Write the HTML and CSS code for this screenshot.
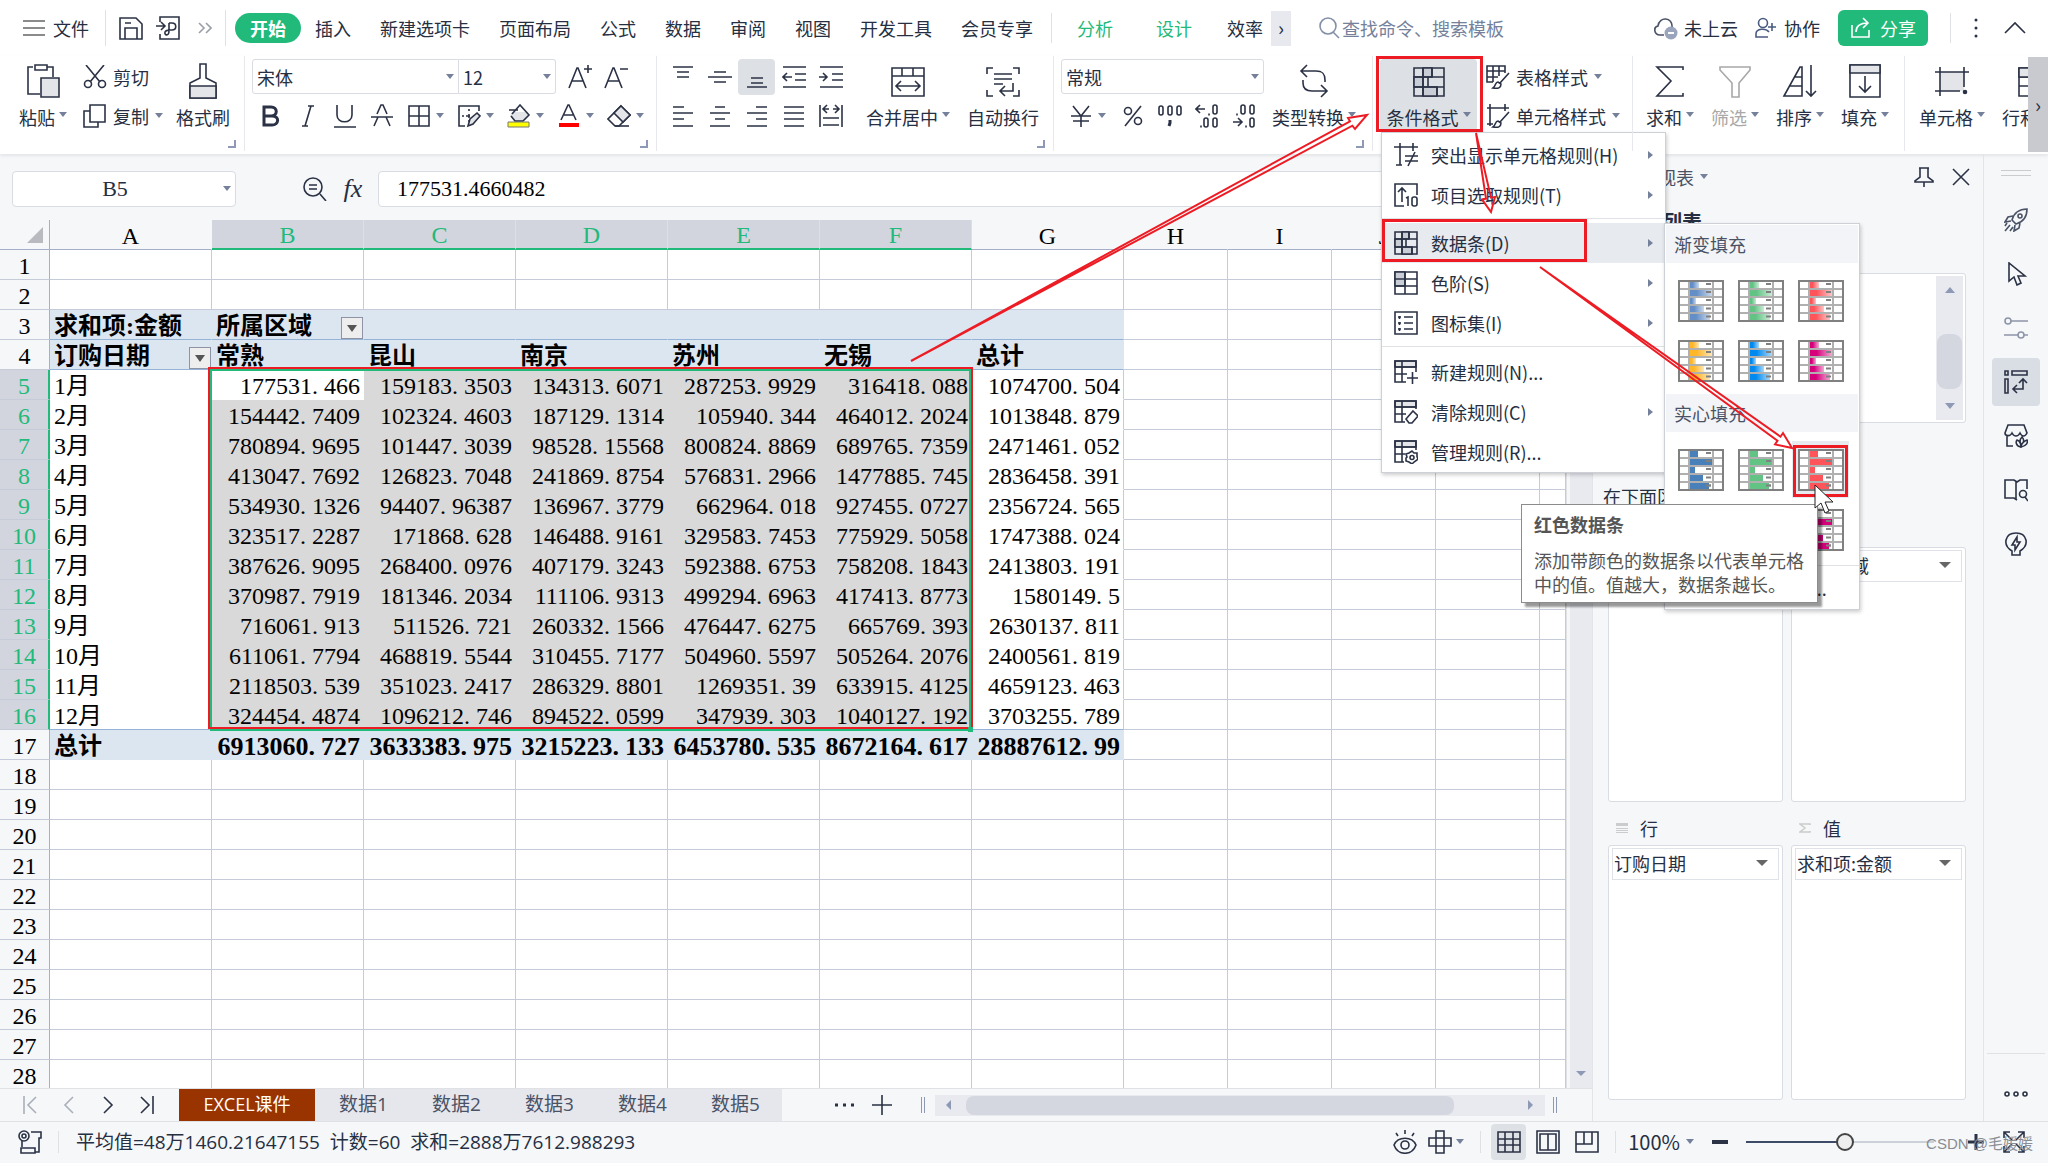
FILE: index.html
```html
<!DOCTYPE html>
<html lang="zh-CN">
<head>
<meta charset="utf-8">
<title>EXCEL课件</title>
<link rel="stylesheet" href="styles.css">
</head>
<body>
<svg class="defs" aria-hidden="true">
  <defs>
    <linearGradient id="fadeGrad"><stop offset="0" stop-color="#fff"/><stop offset=".3" stop-color="#fff"/><stop offset="1" stop-color="#555"/></linearGradient>
    <mask id="fade" x="0" y="0" width="1" height="1" maskContentUnits="objectBoundingBox"><rect width="1" height="1" fill="url(#fadeGrad)" stroke="none"/></mask>
    <symbol id="thumb-grid" viewBox="0 0 46 42">
      <path d="M11 1v40M35 1v40M1 9h44M1 17h44M1 25h44M1 33h44" stroke="#b0b0b0" stroke-width="2" fill="none"/>
      <path d="M28 4h5M28 12h5M28 20h5M28 28.500h5M28 36.500h5" stroke="#808080" stroke-width="2"/>
      <rect x="1" y="1" width="44" height="40" fill="none" stroke="#808080" stroke-width="2"/>
    </symbol>
    <symbol id="bars-gradient" viewBox="0 0 46 42">
      <rect width="46" height="42" fill="#fff"/>
      <g fill="currentColor"><rect x="12" y="2" width="9" height="6" mask="url(#fade)"/><rect x="12" y="10" width="22" height="6" mask="url(#fade)"/><rect x="12" y="18" width="6" height="6" mask="url(#fade)"/><rect x="12" y="26" width="14" height="6" mask="url(#fade)"/><rect x="12" y="34" width="20" height="6" mask="url(#fade)"/></g>
      <use href="#thumb-grid"/>
    </symbol>
    <symbol id="bars-solid" viewBox="0 0 46 42">
      <rect width="46" height="42" fill="#fff"/>
      <use href="#thumb-grid"/>
      <path fill="currentColor" d="M12 2h8v6h-8zM12 10h22v6H12zM12 18h5v6h-5zM12 26h13v6H12zM12 34h19v6H12z"/>
      <path d="M28 12h5M28 36.500h5" stroke="#808080" stroke-width="2"/>
    </symbol>
    <symbol id="down" viewBox="0 0 8 6"><path d="M0 0h8L4 5z" fill="#75819b"/></symbol>
    <symbol id="corner" viewBox="0 0 8 8"><path d="M7 0v7H0" fill="none" stroke="#8d99b5" stroke-width="2"/></symbol>
  </defs>
</svg>

<header class="topbar">
  <button class="file"><svg class="i24" viewBox="0 0 24 24"><path d="M1 5h22M1 12h22M1 19h22"/></svg>文件</button>
  <span class="vline"></span>
  <button class="quick" aria-label="保存"><svg class="i24" viewBox="0 0 24 24"><path d="M1 2h16l6 6v15H1zM6 23V12h12v11M6 7h6"/></svg></button>
  <button class="quick" aria-label="输出为PDF"><svg class="i24" viewBox="0 0 24 24"><path d="M4 6V1h19v22H4v-5M0 10h8M5 6l4 4-4 4M13 7h3c5 0 5 7 0 7h-2M13 7v8c0 6-5 4-4 1 1-2 3-2 5-2"/></svg></button>
  <button class="more" aria-label="更多"><svg class="i14" viewBox="0 0 14 14"><path d="M1 2l5 5-5 5M8 2l5 5-5 5" stroke="#9a9fa8"/></svg></button>
  <span class="vline"></span>
  <nav class="tabs main-tabs">
    <a class="current" href="#">开始</a><a href="#">插入</a><a href="#">新建选项卡</a><a href="#">页面布局</a><a href="#">公式</a><a href="#">数据</a><a href="#">审阅</a><a href="#">视图</a><a href="#">开发工具</a><a href="#">会员专享</a>
  </nav>
  <span class="vline short"></span>
  <nav class="tabs extra"><a class="green" href="#">分析</a><a class="green" href="#">设计</a><a href="#">效率</a></nav>
  <button class="tab-next" aria-label="下一个">›</button>
  <label class="search"><svg class="i22" viewBox="0 0 22 22"><circle cx="10" cy="9" r="8"/><path d="M15 15l6 6"/></svg><input type="text" placeholder="查找命令、搜索模板" aria-label="查找命令、搜索模板"></label>
  <div class="account">
    <button class="cloud"><svg class="i24" viewBox="0 0 24 24"><path d="M10 19H6C0 19-1 11 4 10 5 0 19 1 18 11" stroke="#4a5266"/><circle cx="17" cy="17" r="6.500" fill="#9aa5bd" stroke="none"/><path d="M14 17h6" stroke="#fff" stroke-width="2"/></svg>未上云</button>
    <button class="collab"><svg class="i22" viewBox="0 0 22 22"><circle cx="8" cy="6" r="4.500" stroke="#4a5a80"/><path d="M13 20H1v-3c0-6 10-6 13-2M13 10h8M17 6v8" stroke="#4a5a80"/></svg>协作</button>
    <button class="share"><svg class="i22" viewBox="0 0 22 22"><path d="M2 8v12h17v-7M6 15c0-6 4-9 12-9M13 1l5 5-5 5" stroke="#fff"/></svg>分享</button>
    <span class="vline short"></span>
    <button class="dots" aria-label="菜单"><svg class="i22" viewBox="0 0 22 22"><path d="M11 3v.1M11 11v.1M11 19v.1" stroke-width="3" stroke-linecap="round"/></svg></button>
    <button aria-label="收起"><svg class="i22" viewBox="0 0 22 22"><path d="M1 16L11 6l10 10"/></svg></button>
  </div>
</header>

<section class="ribbon">
  <div class="group g1">
    <button class="big w52"><svg class="i36" viewBox="0 0 36 36"><path d="M8 4H3v27h12M22 4h6v10M10 2h12v5H10z"/><path d="M16 15h18v19H16z" fill="#e3e5e9"/></svg><span>粘贴<svg class="dn"><use href="#down"/></svg></span></button>
    <div class="stack clip">
      <button><svg class="i24" viewBox="0 0 24 24"><path d="M3 0l14 17M21 0L7 17"/><circle cx="5" cy="19" r="3.500"/><circle cx="19" cy="19" r="3.500"/></svg>剪切</button>
      <button><svg class="i24" viewBox="0 0 24 24"><path d="M7 1h15v17H7zM7 7H1v16h14v-5"/></svg>复制<svg class="dn"><use href="#down"/></svg></button>
    </div>
    <button class="big w54"><svg class="i36" viewBox="0 0 36 36"><path d="M15 1h6v14l10 5v15H5V20l10-5z"/><path d="M5 23h26v12H5z" fill="#e3e5e9"/></svg><span>格式刷</span></button>
    <svg class="launch"><use href="#corner"/></svg>
  </div>
  <div class="group g2">
    <div class="stack">
      <div class="row"><div class="combo wide"><select aria-label="字体"><option>宋体</option></select><svg class="dn"><use href="#down"/></svg></div><div class="combo size"><select aria-label="字号"><option>12</option></select><svg class="dn"><use href="#down"/></svg></div>
        <button class="w36 afirst" aria-label="增大字号"><svg class="i24" viewBox="0 0 24 24"><path d="M1 23L9 3h1l8 20M4 16h11M20 0v8M16 4h8"/></svg></button><button class="w36" aria-label="减小字号"><svg class="i24" viewBox="0 0 24 24"><path d="M1 23L9 3h1l8 20M4 16h11M16 4h8"/></svg></button></div>
      <div class="row">
        <button class="w37" aria-label="加粗"><svg class="i24" viewBox="0 0 24 24"><path d="M5 3h7c7 0 7 9 0 9H5zM5 12h8c8 0 7 9 0 9H5z" stroke-width="3"/></svg></button>
        <button class="w37" aria-label="倾斜"><svg class="i24" viewBox="0 0 24 24"><path d="M12 2h6M6 22h6M15 2L9 22"/></svg></button>
        <button class="w37" aria-label="下划线"><svg class="i24" viewBox="0 0 24 24"><path d="M4 1v10c0 9 15 9 15 0V1M1 23h22"/></svg></button>
        <button class="w37" aria-label="删除线"><svg class="i24" viewBox="0 0 24 24"><path d="M7 10l4-9h2l4 9M1 13h22M4 22l4-9M20 22l-4-9"/></svg></button>
        <button class="split" aria-label="边框"><svg class="i24" viewBox="0 0 24 24"><path d="M2 2h20v20H2zM12 2v20M2 12h20"/></svg><svg class="dn"><use href="#down"/></svg></button>
        <button class="split" aria-label="绘制边框"><svg class="i24" viewBox="0 0 24 24"><path d="M8 22H2V2h20v5M5 12h2M9 12h4M12 5v2M12 10v4M12 16v2"/><path d="M11 22l2-7 7-6 3 3-7 8z" fill="#e3e5e9"/></svg><svg class="dn"><use href="#down"/></svg></button>
        <button class="split" aria-label="填充颜色"><svg class="i24" viewBox="0 0 24 24"><path d="M5 8h14l3 4-6 6H8l-5-6z" fill="#e3e5e9" stroke="none"/><path d="M2 6h9M5 10l8-9 9 10-6 6H8l-4-5"/><path d="M1 18h21v5H1z" fill="#ff0" stroke="#777" stroke-width="1"/></svg><svg class="dn"><use href="#down"/></svg></button>
        <button class="split" aria-label="字体颜色"><svg class="i24" viewBox="0 0 24 24"><path d="M4 16L11 1h1l7 15M7 11h9"/><path d="M2 21h20" stroke="red" stroke-width="4"/></svg><svg class="dn"><use href="#down"/></svg></button>
        <button class="split" aria-label="清除"><svg class="i24" viewBox="0 0 24 24"><path d="M14 2l9 9-11 11H8l-7-7z"/><path d="M14 2l9 9-7 7-9-9z" fill="#e3e5e9"/><path d="M8 22h14"/></svg><svg class="dn"><use href="#down"/></svg></button>
      </div>
    </div>
    <svg class="launch"><use href="#corner"/></svg>
  </div>
  <div class="group g3">
    <div class="stack">
      <div class="row">
        <button class="w37" aria-label="顶端对齐"><svg class="i24" viewBox="0 0 24 24"><path d="M2 2h20M6 7h12M6 12h12"/></svg></button>
        <button class="w37" aria-label="垂直居中"><svg class="i24" viewBox="0 0 24 24"><path d="M6 7h12M0 12h24M6 17h12"/></svg></button>
        <button class="w37 on" aria-label="底端对齐"><svg class="i24" viewBox="0 0 24 24"><path d="M6 13h12M6 18h12M2 22h20"/></svg></button>
        <button class="w37" aria-label="减少缩进"><svg class="i24" viewBox="0 0 24 24"><path d="M1 2h23M13 9h11M13 15h11M1 22h23M1 12h9M5 8l-4 4 4 4"/></svg></button>
        <button class="w37" aria-label="增加缩进"><svg class="i24" viewBox="0 0 24 24"><path d="M1 2h23M13 9h11M13 15h11M1 22h23M0 12h8M4 8l4 4-4 4"/></svg></button>
      </div>
      <div class="row">
        <button class="w37" aria-label="左对齐"><svg class="i24" viewBox="0 0 24 24"><path d="M2 3h11M2 9h20M2 15h11M2 22h20"/></svg></button>
        <button class="w37" aria-label="居中"><svg class="i24" viewBox="0 0 24 24"><path d="M7 3h10M2 9h20M7 15h10M2 22h20"/></svg></button>
        <button class="w37" aria-label="右对齐"><svg class="i24" viewBox="0 0 24 24"><path d="M11 3h11M2 9h20M11 15h11M2 22h20"/></svg></button>
        <button class="w37" aria-label="两端对齐"><svg class="i24" viewBox="0 0 24 24"><path d="M2 3h20M2 9h20M2 15h20M2 22h20"/></svg></button>
        <button class="w37" aria-label="分散对齐"><svg class="i24" viewBox="0 0 24 24"><path d="M1 1v22M23 1v22M5 5h5M14 5h5M8 1L4 5l4 4M16 1l4 4-4 4M4 14h16M4 21h16"/></svg></button>
      </div>
    </div>
    <button class="big gap17 w84"><svg class="i36" viewBox="0 0 36 36"><path d="M2 5h32v28H2zM2 13h32M12 5v8M23 5v8M6 23h24M11 18l-5 5 5 5M25 18l5 5-5 5"/></svg><span>合并居中<svg class="dn"><use href="#down"/></svg></span></button>
    <button class="big gap17 w72"><svg class="i36" viewBox="0 0 36 36"><path d="M2 11V5h6M28 5h6v6M2 27v6h6M34 27v6h-6M9 11h18M9 16h18M9 21h9M28 20v8H15M20 23l-5 5 5 5"/></svg><span>自动换行</span></button>
    <svg class="launch"><use href="#corner"/></svg>
  </div>
  <div class="group g4">
    <div class="stack">
      <div class="row"><div class="combo fmt"><select aria-label="数字格式"><option>常规</option></select><svg class="dn"><use href="#down"/></svg></div></div>
      <div class="row">
        <button class="split yen" aria-label="货币"><svg class="i24" viewBox="0 0 24 24"><path d="M4 2l8 10 8-10M12 12v11M2 12h20M4 17h16"/></svg><svg class="dn"><use href="#down"/></svg></button>
        <button class="w37" aria-label="百分比"><svg class="i24" viewBox="0 0 24 24"><path d="M20 2L4 22"/><circle cx="7" cy="7" r="3.500"/><circle cx="17" cy="17" r="3.500"/></svg></button>
        <button class="w37" aria-label="千位分隔"><svg class="i24" viewBox="0 0 24 24"><rect x="1" y="2" width="4" height="9" rx="2"/><rect x="10" y="2" width="4" height="9" rx="2"/><rect x="19" y="2" width="4" height="9" rx="2"/><path d="M12 16v3l-1 3" stroke-width="3"/></svg></button>
        <button class="w37" aria-label="增加小数位"><svg class="i24" viewBox="0 0 24 24"><path d="M1 5h9M5 1L1 5l4 4M14 9.500v2M6 21.500v2"/><rect x="18" y="1" width="4" height="9" rx="2"/><rect x="9" y="14" width="4" height="9" rx="2"/><rect x="18" y="14" width="4" height="9" rx="2"/></svg></button>
        <button class="w37" aria-label="减少小数位"><svg class="i24" viewBox="0 0 24 24"><path d="M1 18h9M6 14l4 4-4 4M5 9.500v2M14 21.500v2"/><rect x="9" y="1" width="4" height="9" rx="2"/><rect x="18" y="1" width="4" height="9" rx="2"/><rect x="18" y="14" width="4" height="9" rx="2"/></svg></button>
      </div>
    </div>
    <button class="big gap8 w84"><svg class="i36" viewBox="0 0 36 36"><path d="M11 2L5 8l6 6M5 8h15c7 0 9 3 9 9v2M7 17v3c0 6 3 8 9 8h14M25 22l6 6-6 6"/></svg><span>类型转换<svg class="dn"><use href="#down"/></svg></span></button>
    <svg class="launch"><use href="#corner"/></svg>
  </div>
  <div class="group g5">
    <div class="cond">
      <button class="big w99 on marked"><svg class="i36" viewBox="0 0 36 36"><path d="M3 5h30v28H3z"/><path d="M12 5h9v9h-9zM3 14h9v10H3zM12 24h14v9H12z" fill="#c9cdd6"/><path d="M3 14h30M3 24h30M12 5v28M21 5v9M17 14v10M26 24v9"/></svg><span>条件格式<svg class="dn"><use href="#down"/></svg></span></button>
      <div class="menu">
        <button class="item"><svg class="i24" viewBox="0 0 24 24"><path d="M0 4h24M6 0v22M19 0v8M2 22h6M11 13h13M11 18h13M21 9l-7 14"/></svg>突出显示单元格规则(H)<i class="sub"></i></button>
        <button class="item"><svg class="i24" viewBox="0 0 24 24"><path d="M10 23H1V1h22v11M8 6v13M4 9l4-4 4 4M12 15l2-1v9"/><rect x="18" y="14" width="5" height="9" rx="2"/></svg>项目选取规则(T)<i class="sub"></i></button>
        <hr>
        <div class="holder">
          <button class="item on marked-item"><svg class="i24" viewBox="0 0 24 24"><path d="M1 1h22v22H1z"/><path d="M8 1h7v7H8zM1 8h7v8H1zM8 16h10v7H8z" fill="#c9cdd6"/><path d="M1 8h22M1 16h22M8 1v22M15 1v7M12 8v8M18 16v7"/></svg>数据条(D)<i class="sub"></i></button>
          <div class="submenu">
            <h3>渐变填充</h3>
            <div class="thumbs">
              <button class="c-blue" aria-label="蓝色数据条"><svg><use href="#bars-gradient"/></svg></button>
              <button class="c-green" aria-label="绿色数据条"><svg><use href="#bars-gradient"/></svg></button>
              <button class="c-red" aria-label="红色数据条"><svg><use href="#bars-gradient"/></svg></button>
              <button class="c-orange" aria-label="橙色数据条"><svg><use href="#bars-gradient"/></svg></button>
              <button class="c-sky" aria-label="浅蓝色数据条"><svg><use href="#bars-gradient"/></svg></button>
              <button class="c-pink" aria-label="紫色数据条"><svg><use href="#bars-gradient"/></svg></button>
            </div>
            <h3 class="second">实心填充</h3>
            <div class="thumbs">
              <button class="c-navy" aria-label="蓝色数据条"><svg><use href="#bars-solid"/></svg></button>
              <button class="c-green" aria-label="绿色数据条"><svg><use href="#bars-solid"/></svg></button>
              <button class="c-red hover" aria-label="红色数据条"><svg><use href="#bars-solid"/></svg></button>
              <button class="c-orange" aria-label="橙色数据条"><svg><use href="#bars-solid"/></svg></button>
              <button class="c-sky" aria-label="浅蓝色数据条"><svg><use href="#bars-solid"/></svg></button>
              <button class="c-pink" aria-label="紫色数据条"><svg><use href="#bars-solid"/></svg></button>
            </div>
            <button class="other">其他规则(M)...</button>
            <div class="tooltip"><strong>红色数据条</strong><p>添加带颜色的数据条以代表单元格中的值。值越大，数据条越长。</p></div>
          </div>
        </div>
        <button class="item"><svg class="i24" viewBox="0 0 24 24"><path d="M1 1h22v22H1z"/><path d="M1 1h10v14H1z" fill="#c9cdd6"/><path d="M1 8h22M1 15h22M11 1v22"/></svg>色阶(S)<i class="sub"></i></button>
        <button class="item"><svg class="i24" viewBox="0 0 24 24"><path d="M1 1h22v22H1zM10 6h9M10 12h9M10 18h9M4 6h3M5.500 5v3M4 12h3M5.500 11v3M4 18h3M5.500 17v3"/></svg>图标集(I)<i class="sub"></i></button>
        <hr class="late">
        <button class="item"><svg class="i24" viewBox="0 0 24 24"><path d="M1 1h21v6H1z" fill="#e3e5e9"/><path d="M12 22H1V1h21v11M1 7h21M1 14h12M8 1v21M13 18h11M18.500 12v12"/></svg>新建规则(N)...</button>
        <button class="item"><svg class="i24" viewBox="0 0 24 24"><path d="M1 1h21v6H1z" fill="#e3e5e9"/><path d="M11 22H1V1h21v8M1 7h21M1 14h11M8 1v21"/><path d="M19 11l5 5-6 7h-3l-3-4z" fill="#fff"/></svg>清除规则(C)<i class="sub"></i></button>
        <button class="item"><svg class="i24" viewBox="0 0 24 24"><path d="M1 1h21v6H1z" fill="#e3e5e9"/><path d="M10 22H1V1h21v9M1 7h21M1 14h10M8 1v21"/><path d="M18 11l2 2h3v4l1 1-1 2-3 2-2 2-3-2-3-1v-3l1-1-1-3 3-1z" fill="#fff"/><circle cx="18" cy="17.500" r="2"/></svg>管理规则(R)...</button>
      </div>
    </div>
    <div class="stack styles">
      <button><svg class="i24" viewBox="0 0 24 24"><path d="M7 17H1V1h18v7M1 6h18M1 12h11M7 1v16M13 1v10M23 8l-9 10M12 17c-3 0-2 4-5 6 5 1 8 0 8-4z"/></svg>表格样式<svg class="dn"><use href="#down"/></svg></button>
      <button><svg class="i24" viewBox="0 0 24 24"><path d="M1 4h22M4 0v22M19 0v7M1 20h6M23 8l-9 10M12 17c-3 0-2 4-5 6 5 1 8 0 8-4z"/></svg>单元格样式<svg class="dn"><use href="#down"/></svg></button>
    </div>
  </div>
  <div class="group g6">
    <button class="big w48"><svg class="i36" viewBox="0 0 36 36"><path d="M31 7V4H5l14 14L5 33h26v-3"/></svg><span>求和<svg class="dn"><use href="#down"/></svg></span></button>
    <button class="big w48 off" disabled><svg class="i36" viewBox="0 0 36 36"><path d="M3 4h30v3L22 20v14h-7V20L3 7z" stroke="#a8a8a8"/></svg><span>筛选<svg class="dn"><use href="#down"/></svg></span></button>
    <button class="big w48"><svg class="i36" viewBox="0 0 36 36"><path d="M2 33L18 4h2v29zM13 14h7M8 23h12M29 2v31M24 28l5 5 5-5"/></svg><span>排序<svg class="dn"><use href="#down"/></svg></span></button>
    <button class="big w48"><svg class="i36" viewBox="0 0 36 36"><path d="M3 2h30v32H3z"/><path d="M3 2h30v8H3z" fill="#e3e5e9"/><path d="M18 13v16M12 23l6 6 6-6"/></svg><span>填充<svg class="dn"><use href="#down"/></svg></span></button>
  </div>
  <div class="group g7">
    <button class="big w66"><svg class="i36" viewBox="0 0 36 36"><path d="M6 9h24v19H6z" fill="#e3e5e9" stroke="none"/><path d="M1 9h34M6 4v29M30 4v20M1 28h25"/><circle cx="31" cy="29" r="1.500" fill="#2b3245"/></svg><span>单元格<svg class="dn"><use href="#down"/></svg></span></button>
    <button class="big w66 rc"><svg class="i36" viewBox="0 0 36 36"><path d="M17 5h18v28H17zM17 14h18M17 23h18"/><path d="M17 5h18v9H17z" fill="#e3e5e9"/></svg><span>行和列</span></button>
  </div>
  <button class="ribbon-next" aria-label="更多功能">›</button>
</section>

<main class="work">
  <section class="book">
    <div class="formula">
      <label class="namebox"><input type="text" value="B5" aria-label="名称框"><svg class="dn"><use href="#down"/></svg></label>
      <button class="fxzoom" aria-label="浏览公式"><svg class="i24" viewBox="0 0 24 24"><circle cx="10" cy="10" r="9"/><path d="M17 17l6 7M6 8h8M6 12h8"/></svg></button>
      <button class="fx">fx</button>
      <input class="expr" type="text" value="177531.4660482" aria-label="编辑栏">
    </div>
    <div class="viewport">
      <div class="sheet">
        <table id="grid"></table>
        <div class="selection"><span></span></div>
      </div>
      <div class="vscroll"><i></i></div>
    </div>
    <div class="sheetbar">
      <div class="pager">
        <button aria-label="第一个"><svg class="i18" viewBox="0 0 18 18"><path d="M3 0v18M15 1L7 9l8 8" stroke="#aaafb9"/></svg></button>
        <button aria-label="上一个"><svg class="i18" viewBox="0 0 18 18"><path d="M13 1L5 9l8 8" stroke="#aaafb9"/></svg></button>
        <button aria-label="下一个"><svg class="i18" viewBox="0 0 18 18"><path d="M5 1l8 8-8 8"/></svg></button>
        <button aria-label="最后一个"><svg class="i18" viewBox="0 0 18 18"><path d="M3 1l8 8-8 8M15 0v18"/></svg></button>
      </div>
      <nav class="sheets"><a class="current" href="#">EXCEL课件</a><a href="#">数据1</a><a href="#">数据2</a><a href="#">数据3</a><a href="#">数据4</a><a href="#">数据5</a></nav>
      <button class="all" aria-label="全部工作表"><svg class="i20" viewBox="0 0 20 20"><path d="M0 10h3M8 10h3M16 10h3" stroke-width="3"/></svg></button>
      <button class="add" aria-label="新建工作表"><svg class="i20" viewBox="0 0 20 20"><path d="M10 0v20M0 10h20"/></svg></button>
      <span class="grip"></span>
      <div class="hscroll"><i class="l"></i><b></b><i class="r"></i></div>
      <span class="grip end"></span>
    </div>
  </section>

  <aside class="panel">
    <div class="panel-head"><span>数据透视表</span><svg class="dn"><use href="#down"/></svg>
      <button class="pin" aria-label="固定"><svg class="i20" viewBox="0 0 20 20"><path d="M5 1h10M6 1v9l-5 4v1h18v-1l-5-4V1M10 15v5"/></svg></button>
      <button aria-label="关闭"><svg class="i18" viewBox="0 0 18 18"><path d="M1 1l16 16M17 1L1 17"/></svg></button></div>
    <h2 class="list-title">字段列表</h2>
    <div class="fields"><div class="fscroll"><i class="up"></i><b></b><i class="dw"></i></div></div>
    <h2 class="zone">数据透视表区域</h2>
    <p class="hint">在下面区域中拖动字段</p>
    <div class="zones">
      <div class="zone-box"><h4>筛选器</h4><div class="drop"></div></div>
      <div class="zone-box"><h4>列</h4><div class="drop"><button class="chip">所属区域<i></i></button></div></div>
      <div class="zone-box"><h4><svg viewBox="0 0 12 10"><path d="M0 0h12v3H0zM0 5h12v1H0zM0 7h12v1H0zM0 9h12v1H0z" fill="#ccc" stroke="none"/></svg>行</h4><div class="drop"><button class="chip">订购日期<i></i></button></div></div>
      <div class="zone-box"><h4><svg viewBox="0 0 12 10"><path d="M11 2V1H1l5 4-5 4h10V8" stroke="#ccc"/></svg>值</h4><div class="drop"><button class="chip">求和项:金额<i></i></button></div></div>
    </div>
  </aside>

  <nav class="rail">
    <span class="handle"></span>
    <button aria-label="智能工具"><svg class="i24" viewBox="0 0 24 24"><g stroke="#4a5266"><path d="M8 12C10 5 15 1 23 1c0 8-4 13-11 15zM9 8L4 9l-3 5 6-1M16 15l-1 5-5 3 1-6M6 17l-5 6M3 15l-2 3M9 19l-3 4"/><circle cx="16" cy="8" r="2"/></g></svg></button>
    <button aria-label="选择"><svg class="i24" viewBox="0 0 24 24"><path d="M5 1v18l5-4 3 8 4-2-3-7h7z"/></svg></button>
    <button aria-label="属性"><svg class="i24" viewBox="0 0 24 24"><g stroke="#8d95a8"><circle cx="4" cy="5" r="3"/><path d="M7 5h17M0 19h14M20 19h4"/><circle cx="17" cy="19" r="3"/></g></svg></button>
    <button class="on" aria-label="透视表"><svg class="i24" viewBox="0 0 24 24"><path d="M8 1h15v4H8zM1 1h3v4H1zM1 9h3v14H1zM10 19h9v-9M13 15l-4 4 4 4M15 13l4-4 4 4"/></svg></button>
    <button aria-label="素材"><svg class="i24" viewBox="0 0 24 24"><path d="M9 22H3V11M1 9l3-8h16l3 8c-2 4-5 4-7 0-2 4-6 4-8 0-2 4-7 3-7 0zM17 23c-6-1-5-6-4-7 3 1 4 4 4 7zM17 23c6-1 7-5 6-7-3 1-6 4-6 7zM17 20c-2-3-1-5 1-7 2 2 2 4 1 6"/></svg></button>
    <button aria-label="帮助"><svg class="i24" viewBox="0 0 24 24"><path d="M13 22l-3-2H1V2h9l3 2 3-2h7v9M12 4v18"/><circle cx="19" cy="16" r="3.500"/><path d="M21 19l3 4"/></svg></button>
    <button aria-label="技巧"><svg class="i24" viewBox="0 0 24 24"><path d="M8 23v-4C-2 13 1 1 12 1s14 12 4 18v4zM13 5l-5 8h3v5l5-8h-3z"/></svg></button>
    <button class="last" aria-label="更多"><svg class="i24" viewBox="0 0 24 24"><circle cx="3" cy="12" r="2"/><circle cx="12" cy="12" r="2"/><circle cx="21" cy="12" r="2"/></svg></button>
  </nav>
</main>

<footer class="status">
  <svg class="i24" viewBox="0 0 24 24"><circle cx="6" cy="6" r="5"/><circle cx="6" cy="6" r="2"/><path d="M13 2h10v6h-2v14h-4M4 11v6M3 18h14v5H3z"/></svg>
  <span class="vline"></span>
  <span class="stats">平均值=48万1460.21647155&nbsp; 计数=60&nbsp; 求和=2888万7612.988293</span>
  <div class="tools">
    <button aria-label="护眼模式"><svg class="i24" viewBox="0 0 24 24"><path d="M1 15c4-9 18-9 22 0-4 11-18 11-22 0zM12 0v4M3 3l2 3M21 3l-2 3"/><circle cx="12" cy="15" r="4"/></svg></button>
    <button class="cross" aria-label="阅读模式"><svg class="i24" viewBox="0 0 24 24"><path d="M8 1h8v22H8zM1 8h22v8H1z"/></svg><svg class="dn"><use href="#down"/></svg></button>
    <span class="vline"></span>
    <button class="view on" aria-label="普通视图"><svg class="i24" viewBox="0 0 24 24"><path d="M1 2h22v20H1zM1 9h22M1 15h22M8 2v20M16 2v20"/></svg></button>
    <button class="view" aria-label="页面布局"><svg class="i24" viewBox="0 0 24 24"><path d="M1 1h22v22H1zM4 4h16v16H4zM12 4v16"/></svg></button>
    <button class="view" aria-label="分页预览"><svg class="i24" viewBox="0 0 24 24"><path d="M1 2h22v20H1zM1 14h16V2M9 2v12"/></svg></button>
    <span class="vline"></span>
    <button class="pct">100%<svg class="dn"><use href="#down"/></svg></button>
    <button aria-label="缩小"><svg class="i18" viewBox="0 0 18 18"><path d="M1 9h16" stroke-width="4"/></svg></button>
    <input type="range" min="0" max="100" value="53" aria-label="缩放">
    <button class="plus" aria-label="放大"><svg class="i18" viewBox="0 0 18 18"><path d="M1 9h16M9 1v16" stroke-width="3"/></svg></button>
    <button class="full" aria-label="全屏"><svg class="i22" viewBox="0 0 22 22"><path d="M1 7V1h6M15 1h6v6M1 15v6h6M21 15v6h-6M1 1l8 8M21 1l-8 8M1 21l8-8M21 21l-8-8"/></svg></button>
  </div>
  <span class="watermark">CSDN @毛媛媛</span>
</footer>

<svg class="ink" aria-hidden="true">
  <path d="M911 361L1350 121.300 1348 118 1367 115 1355 129 1352.400 125.700Z"/>
  <path d="M1476 133L1491 197.700 1495 197 1491 212 1482 199.400 1486 198.700Z"/>
  <path d="M1540 267L1780.500 436.700 1783 433 1792 448 1775 444.400 1777.500 440.700Z"/>
  <path class="pointer" d="M1815 485v23l6-5 4 10 4-2-4-9h8z"/>
</svg>
<script src="grid.js"></script>
</body>
</html>
```
FILE: grid.js
```js
const columns = ["A", "B", "C", "D", "E", "F", "G", "H", "I", "J", "K", ""];
const rows = {
  3: ["求和项:金额", "所属区域"],
  4: ["订购日期", "常熟", "昆山", "南京", "苏州", "无锡", "总计"],
  5: ["1月", "177531.466", "159183.3503", "134313.6071", "287253.9929", "316418.088", "1074700.504"],
  6: ["2月", "154442.7409", "102324.4603", "187129.1314", "105940.344", "464012.2024", "1013848.879"],
  7: ["3月", "780894.9695", "101447.3039", "98528.15568", "800824.8869", "689765.7359", "2471461.052"],
  8: ["4月", "413047.7692", "126823.7048", "241869.8754", "576831.2966", "1477885.745", "2836458.391"],
  9: ["5月", "534930.1326", "94407.96387", "136967.3779", "662964.018", "927455.0727", "2356724.565"],
  10: ["6月", "323517.2287", "171868.628", "146488.9161", "329583.7453", "775929.5058", "1747388.024"],
  11: ["7月", "387626.9095", "268400.0976", "407179.3243", "592388.6753", "758208.1843", "2413803.191"],
  12: ["8月", "370987.7919", "181346.2034", "111106.9313", "499294.6963", "417413.8773", "1580149.5"],
  13: ["9月", "716061.913", "511526.721", "260332.1566", "476447.6275", "665769.393", "2630137.811"],
  14: ["10月", "611061.7794", "468819.5544", "310455.7177", "504960.5597", "505264.2076", "2400561.819"],
  15: ["11月", "2118503.539", "351023.2417", "286329.8801", "1269351.39", "633915.4125", "4659123.463"],
  16: ["12月", "324454.4874", "1096212.746", "894522.0599", "347939.303", "1040127.192", "3703255.789"],
  17: ["总计", "6913060.727", "3633383.975", "3215223.133", "6453780.535", "8672164.617", "28887612.99"]
};
const filters = { "3-1": true, "4-0": true };

const cell = (r, c) => {
  const text = (rows[r] || [])[c] || "";
  const names = [];
  if (c < 7 && r >= 3 && r <= 17) {
    names.push(r <= 4 ? "head" : r === 17 ? "total" : "body");
    if (r >= 5 && r <= 16 && c >= 1 && c <= 5 && !(r === 5 && c === 1)) names.push("picked");
    if (r === 16) names.push("ruled");
    if (c === 6) names.push("edge");
  }
  if (/^\d+\./.test(text)) names.push("num");
  const shown = /^\d+\./.test(text) ? text.replace(".", '<span class="point">.</span>') : text;
  const button = filters[r + "-" + c] ? '<button class="filter" aria-label="筛选"></button>' : "";
  return `<td class="${names.join(" ")}">${shown}${button}</td>`;
};

let html = "<colgroup><col class='c-head'><col class='c-a'>" + "<col class='c-wide'>".repeat(6) +
  "<col class='c-std'>".repeat(4) + "<col></colgroup><thead><tr><th class='all-cells'></th>";
columns.forEach((name, i) => { html += `<th class="${i >= 1 && i <= 5 ? "picked" : ""}">${name}</th>`; });
html += "</tr></thead><tbody>";
for (let r = 1; r <= 28; r++) {
  html += `<tr><th class="${r >= 5 && r <= 16 ? "picked" : ""}">${r}</th>`;
  for (let c = 0; c < columns.length; c++) html += cell(r, c);
  html += "</tr>";
}
document.getElementById("grid").innerHTML = html + "</tbody>";
```
FILE: styles.css
```css
*, *::before, *::after { box-sizing: border-box; }
html, body { margin: 0; height: 100%; }
body {
  display: flex; flex-direction: column; height: 100vh; overflow: hidden; position: relative;
  background: #f5f7f9; color: #262f42;
  font: 18px/24px "Noto Sans CJK SC", "Noto Sans", sans-serif; white-space: nowrap;
}
button, input, select { font: inherit; color: inherit; background: none; border: 0; padding: 0; margin: 0; outline: 0; }
button { display: flex; align-items: center; justify-content: center; white-space: nowrap; flex: none; }
a { color: inherit; text-decoration: none; }
h2, h3, h4, p { margin: 0; font-weight: 400; font-size: 18px; }
svg { fill: none; stroke: #2b3245; stroke-width: 1.6; flex: none; display: block; }
.defs { position: absolute; width: 0; height: 0; }
.i14 { width: 14px; height: 14px; }
.i18 { width: 18px; height: 18px; }
.i20 { width: 20px; height: 20px; }
.i22 { width: 22px; height: 22px; }
.i24 { width: 24px; height: 24px; }
.i36 { width: 36px; height: 36px; }
.dn { width: 8px; height: 6px; stroke: none; }
.vline { width: 1px; height: 36px; background: #dfe1e5; flex: none; }
.vline.short { height: 30px; }

/* top bar */
.topbar { display: flex; align-items: center; height: 56px; flex: none; background: #fff; }
.file { gap: 7px; margin: 0 16px 0 22px; }
.file svg { stroke: #666; }
.quick { margin-left: 13px; }
.more { margin: 0 13px 0 18px; }
.tabs { display: flex; align-items: center; gap: 29px; }
.tabs .current { background: #21ba7b; color: #fff; font-weight: 700; border-radius: 15px; padding: 3px 15px; margin: 0 -15px 0 9px; }
.main-tabs + .vline { margin: 0 25px 0 18px; }
.extra { gap: 43px; }
.extra a:last-child { margin-left: -8px; }
.green { color: #21ba7b; }
.tab-next { width: 20px; height: 35px; background: #e7e9ee; margin-left: 8px; font-size: 20px; }
.search { display: flex; align-items: center; gap: 2px; margin-left: 27px; }
.search svg { stroke: #8490a8; }
.search input { width: 200px; }
.search input::placeholder { color: #75819b; opacity: 1; }
.account { display: flex; align-items: center; margin-left: auto; padding-right: 22px; }
.cloud { gap: 6px; margin-right: 17px; }
.collab { gap: 7px; }
.share { gap: 8px; height: 36px; width: 90px; background: #21ba7b; color: #fff; border-radius: 6px; margin: 0 22px 0 18px; }
.dots { margin: 0 17px 0 14px; }

/* ribbon */
.ribbon { display: flex; height: 98px; flex: none; background: #fff; position: relative; z-index: 2; box-shadow: 0 2px 3px #e3e5e8; }
.group { display: flex; align-items: flex-start; padding-top: 3px; position: relative; flex: none; }
.group + .group::before { content: ""; position: absolute; left: 0; top: 0; width: 1px; height: 95px; background: #e8e9ec; }
.g1 { width: 244px; padding-left: 17px; }
.g2 { width: 412px; padding-left: 8px; }
.g3 { width: 397px; padding-left: 8px; }
.g4 { width: 319px; padding-left: 8px; }
.g5 { width: 260px; padding-left: 8px; }
.g6 { width: 272px; padding-left: 14px; gap: 17px; }
.g7 { flex: 1; min-width: 0; padding-left: 15px; gap: 17px; overflow: hidden; }
.big { flex-direction: column; justify-content: flex-start; height: 72px; padding-top: 4px; }
.big > span { display: flex; align-items: center; gap: 4px; margin-top: 6px; }
.big .dn { margin-top: -4px; }
.w36 { width: 36px; } .w37 { width: 37px; } .w48 { width: 48px; } .w52 { width: 52px; } .w54 { width: 54px; }
.w66 { width: 66px; } .w72 { width: 72px; } .w84 { width: 84px; } .w99 { width: 97px; margin-right: 2px; }
.gap17 { margin-left: 17px; } .gap8 { margin-left: 8px; }
.rc { align-items: flex-start; }
.off { color: #a8a8a8; }
.on { background: #dde1e5; border-radius: 4px; }
.stack { display: flex; flex-direction: column; gap: 3px; }
.stack > button { height: 36px; gap: 6px; justify-content: flex-start; }
.clip { margin: 0 13px 0 14px; width: 80px; }
.styles { margin-left: 7px; }
.row { display: flex; height: 36px; }
.row > button { height: 36px; }
.split { width: 50px; gap: 5px; }
.yen { width: 53px; }
.combo { display: flex; align-items: center; border: 1px solid #d9dce2; border-radius: 3px; height: 35px; padding: 0 4px; }
.combo select { appearance: none; flex: 1; min-width: 0; }
.wide { width: 207px; border-radius: 3px 0 0 3px; }
.size { width: 97px; border-left: 0; border-radius: 0 3px 3px 0; }
.fmt { width: 203px; }
.afirst { margin-left: 6px; }
.launch { position: absolute; right: 8px; bottom: 6px; width: 8px; height: 8px; stroke: none; }
.ribbon-next { width: 20px; background: #c8cacf; height: 95px; font-size: 20px; margin-top: 1px; }
.cond { position: relative; }
.marked::after, .marked-item::after, .hover::after { content: ""; position: absolute; border: 3px solid #ed1c24; pointer-events: none; }
.marked::after { inset: -3px -4px -1px -4px; }

/* drop-down menus */
.menu, .submenu { position: absolute; background: #fff; border: 1px solid #cdd0d6; box-shadow: 1px 2px 4px #0003; }
.menu { left: 1px; top: 73px; width: 285px; padding: 2px 0 0; }
.menu hr { border: 0; border-top: 1px solid #dfe1e5; margin: 3px 0 4px; }
.menu .late { margin-bottom: 5px; }
.item { width: 100%; height: 40px; justify-content: flex-start; gap: 13px; padding: 0 12px; }
.item .sub { margin-left: auto; border: 4px solid transparent; border-left: 5px solid #75819b; border-right: 0; }
.holder { position: relative; }
.item.on { background: #e7eaef; border-radius: 0; }
.marked-item::after { left: 0; top: -4px; width: 205px; height: 43px; }
.submenu { left: 282px; top: 0; width: 196px; }
.submenu h3 { background: #f3f4f7; padding: 7px 8px; margin: 1px; color: #4a5266; }
.submenu .second { margin-top: 3px; }
.thumbs { display: grid; grid-template-columns: repeat(3, 60px); grid-auto-rows: 60px; padding: 8px 0 0 7px; margin-bottom: -1px; }
.thumbs button { width: 57px; height: 57px; position: relative; }
.thumbs svg { width: 46px; height: 42px; stroke: none; }
.hover { background: #e7eaef; }
.hover::after { inset: 4px 1px 1px 1px; }
.c-blue { color: #638ec6; } .c-green { color: #63c384; } .c-red { color: #ff555a; } .c-orange { color: #ffb628; }
.c-sky { color: #008aef; } .c-pink { color: #d6007b; } .c-navy { color: #4a80ba; }
.other { width: 100%; height: 44px; border-top: 1px solid #dfe1e5; margin-top: 5px; justify-content: flex-start; padding-left: 48px; }
.tooltip { position: absolute; left: -144px; top: 280px; width: 297px; padding: 7px 12px 6px; background: #fff; border: 1px solid #8c8c8c; box-shadow: 4px 4px 2px #0006; color: #555; white-space: normal; }
.tooltip strong { display: block; }
.tooltip p { margin-top: 12px; }

/* formula bar */
.work { display: flex; flex: 1; min-height: 0; }
.book { display: flex; flex-direction: column; flex: 1; min-width: 0; }
.formula { display: flex; align-items: center; height: 66px; flex: none; padding: 4px 8px 0 12px; font: 22px/26px "Liberation Serif", "Noto Sans CJK SC", serif; }
.formula input { min-width: 0; }
.namebox { display: flex; align-items: center; width: 224px; height: 36px; background: #fff; border: 1px solid #d9dce2; border-radius: 4px; padding-right: 4px; }
.namebox input { flex: 1; text-align: center; padding-right: 6px; }
.fxzoom { margin: 0 14px 0 67px; }
.fx { font-style: italic; font-size: 26px; margin-right: 13px; width: 24px; }
.expr { flex: 1; height: 36px; background: #fff; border: 1px solid #d9dce2; border-radius: 4px; padding-left: 18px; color: #000; }

/* sheet */
.viewport { display: flex; flex: 1; min-height: 0; }
.sheet { flex: 1; min-width: 0; overflow: hidden; position: relative; background: #fff; border-right: 1px solid #dfe1e5; }
table { border-collapse: separate; border-spacing: 0; table-layout: fixed; width: 100%; font: 24px/25px "Liberation Serif", "Noto Sans CJK SC", serif; color: #000; }
.c-head { width: 50px; } .c-a { width: 162px; } .c-wide { width: 152px; } .c-std { width: 104px; }
th, td { height: 30px; padding: 0 4px; vertical-align: bottom; border-right: 1px solid #c5cbd9; border-bottom: 1px solid #c5cbd9; overflow: hidden; position: relative; }
th { font-weight: 400; background: #f5f7f9; border-right-color: #a5afc9; padding: 0; }
thead th { border-right-color: #f5f7f9; border-bottom-color: #a5afc9; }
.all-cells { border-right-color: #a5afc9; }
.all-cells::after { content: ""; position: absolute; right: 6px; bottom: 6px; border: 8px solid transparent; border-right-color: #b8bac0; border-bottom-color: #b8bac0; }
th.picked { background: #d2d5dd; color: #21ba7b; }
thead th.picked { border-right-color: #dcdfe6; border-bottom: 2px solid #21ba7b; }
tbody th.picked { border-right: 2px solid #21ba7b; }
.head, .total { background: #dce6f1; border-right-color: #dce6f1; border-bottom-color: #95b3d7; font-weight: 700; }
.total { border-bottom-color: #dce6f1; }
.total.num { font-size: 26px; padding-right: 3px; }
.body { border-color: #fff; }
.body.edge { border-right-color: #c5cbd9; }
.body.picked { background: #d9d9d9; border-color: #d9d9d9; }
.body.ruled { border-bottom-color: #95b3d7; }
.num { text-align: right; padding-right: 3px; }
.point { padding-right: 6px; }
.filter { position: absolute; right: 0; bottom: 0; width: 22px; height: 22px; background: #eee; border: 1px solid #8d93a5; }
.filter::after { content: ""; border: 5px solid transparent; border-top: 7px solid #555; border-bottom: 0; }
.selection { position: absolute; left: 210px; top: 149px; width: 761px; height: 362px; border: 2px solid #21ba7b; }
.selection::before { content: ""; position: absolute; left: -4px; top: -4px; width: 765px; height: 362px; border: 2px solid #ed1c24; }
.selection span { position: absolute; right: -4px; bottom: -3px; width: 5px; height: 5px; background: #21ba7b; }
.vscroll { width: 25px; background: #e8eaf0; border-left: 3px solid #f5f7f9; display: flex; align-items: flex-end; justify-content: center; padding-bottom: 12px; }
.vscroll i { border: 5px solid transparent; border-top-color: #8d99b5; border-bottom: 0; }

/* sheet tabs */
.sheetbar { display: flex; align-items: center; height: 33px; flex: none; border-top: 1px solid #dfe1e5; color: #4a5266; }
.pager { display: flex; gap: 21px; width: 179px; padding-left: 21px; }
.sheets { display: flex; height: 100%; background: #e6e7ed; }
.sheets a { width: 93px; text-align: center; line-height: 31px; font-size: 19px; font-family: "Open Sans", "Noto Sans CJK SC", sans-serif; }
.sheets .current { width: 136px; background: #930; color: #fff; font-size: 18px; margin-right: 2px; }
.all { margin: 0 17px 0 53px; }
.grip { width: 4px; height: 16px; border: 1px solid #8d99b5; border-width: 0 1px; margin: 0 10px 0 29px; flex: none; }
.grip.end { margin: 0 35px 0 8px; }
.hscroll { flex: 1; height: 21px; background: #e8eaf0; display: flex; align-items: center; }
.hscroll b { width: 80%; height: 19px; background: #d4d7df; border-radius: 8px; }
.hscroll i { border: 5px solid transparent; }
.hscroll .l { border-right-color: #8d99b5; border-left: 0; margin: 0 15px 0 11px; }
.hscroll .r { border-left-color: #8d99b5; border-right: 0; margin: 0 12px 0 auto; }

/* pivot panel */
.panel { width: 391px; flex: none; display: flex; flex-direction: column; border-left: 1px solid #e2e4e8; padding: 0 17px 21px 15px; }
.panel-head { display: flex; align-items: center; height: 46px; gap: 6px; color: #4a5266; margin: 0 -4px 0 -4px; }
.pin { margin: 0 12px 0 auto; }
.panel h2 { font-weight: 700; height: 73px; line-height: 44px; font-size: 20px; }
.panel .list-title { padding-left: 14px; }
.fields { height: 150px; background: #fff; border: 1px solid #d9dce2; border-radius: 3px; display: flex; justify-content: flex-end; padding: 2px; }
.fscroll { width: 27px; background: #e8eaf0; display: flex; flex-direction: column; align-items: center; padding: 11px 0; }
.fscroll b { width: 25px; height: 55px; border-radius: 9px; background: #d4d7df; margin-top: auto; margin-bottom: 14px; }
.fscroll i { border: 5px solid transparent; }
.fscroll .up { border-bottom: 6px solid #8d99b5; border-top: 0; }
.fscroll .dw { border-top: 6px solid #8d99b5; border-bottom: 0; }
.panel h2.zone { height: 34px; font-size: 18px; line-height: 24px; margin-top: 26px; }
.hint { margin: 0 0 2px -5px; line-height: 26px; }
.zones { flex: 1; display: grid; grid-template-columns: 1fr 1fr; column-gap: 8px; min-height: 0; }
.zone-box { display: flex; flex-direction: column; min-height: 0; }
.zone-box h4 { height: 36px; line-height: 34px; padding-left: 8px; display: flex; align-items: center; gap: 12px; }
.zone-box:nth-child(n+3) h4 { height: 43px; padding-top: 8px; }
.zone-box svg { width: 12px; height: 10px; }
.drop { flex: 1; background: #fff; border: 1px solid #d9dce2; border-radius: 3px; padding: 2px 3px; }
.chip { width: 100%; height: 32px; border: 1px solid #dfe2e8; justify-content: space-between; padding: 0 10px 2px 1px; }
.chip i { border: 6px solid transparent; border-top-color: #666; border-bottom: 0; }

/* side rail */
.rail { width: 65px; flex: none; border-left: 1px solid #e2e4e8; display: flex; flex-direction: column; align-items: center; gap: 6px; padding-top: 16px; }
.handle { width: 30px; height: 6px; border: 1px solid #ccc; border-width: 1px 0; margin-bottom: 14px; flex: none; }
.rail button { width: 48px; height: 48px; }
.rail .on { background: #d9dde4; }
.rail .last { margin-top: auto; width: 58px; height: 68px; border-top: 1px solid #dfe1e5; padding-top: 13px; }

/* status bar */
.status { height: 42px; flex: none; display: flex; align-items: center; border-top: 1px solid #dfe1e5; padding: 0 0 2px 18px; position: relative; }
.status .vline { height: 22px; margin: 0 17px 0 16px; }
.stats { font: 19px/24px "Open Sans", "Noto Sans CJK SC", sans-serif; }
.tools { display: flex; align-items: center; margin-left: auto; padding-right: 23px; }
.cross { gap: 4px; margin-left: 11px; }
.view { width: 35px; height: 36px; margin-right: 4px; }
.tools .view + .vline { margin: 0 12px 0 7px; }
.tools .vline { margin: 0 10px 0 16px; }
.pct { gap: 6px; margin-right: 17px; font-size: 20px; }
input[type=range] { appearance: none; width: 188px; height: 20px; margin: 0 33px 0 17px; }
input[type=range]::-webkit-slider-runnable-track { height: 2px; background: linear-gradient(90deg, #3d4b68 53%, #ccd0d8 53%); }
input[type=range]::-webkit-slider-thumb { appearance: none; width: 18px; height: 18px; margin-top: -8px; border-radius: 50%; background: #eee; border: 2px solid #444; }
.full { margin-left: 18px; }
.watermark { position: absolute; right: 15px; top: 10px; font: 15px/24px "Liberation Sans", "Noto Sans CJK SC", sans-serif; color: #8a8d93; }

/* red pen arrows */
.ink { position: absolute; left: 0; top: 0; width: 100%; height: 100%; z-index: 3; pointer-events: none; stroke: #ed1c24; stroke-width: 2; }
.pointer { fill: #fff; stroke: #222; stroke-width: 1; }
```
